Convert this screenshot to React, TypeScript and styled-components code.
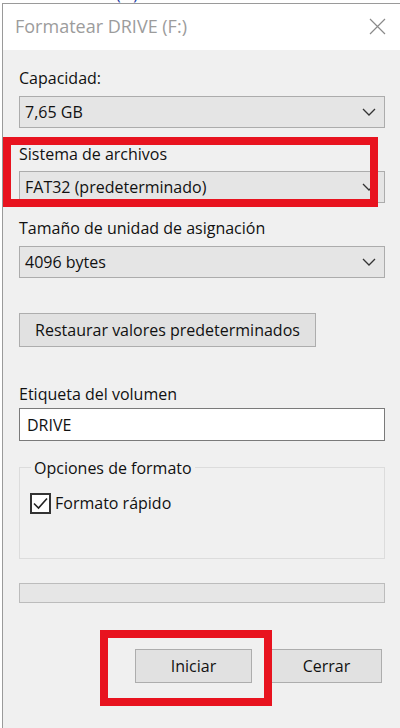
import React from "react";
import styled, { createGlobalStyle } from "styled-components";

const Global = createGlobalStyle`
  html, body { margin: 0; padding: 0; background: #ffffff; }
  body { font-family: "Open Sans", "Noto Sans", sans-serif; }
  * { box-sizing: border-box; }
`;

const Page = styled.div`
  width: 400px;
  height: 728px;
  overflow: hidden;
  position: relative;
  background: #ffffff;
`;

const TopStrip = styled.div`
  height: 3px;
  overflow: hidden;
  background: #ffffff;
`;

const TopText = styled.div`
  margin-top: -14px;
  font-size: 16px;
  line-height: 16px;
  color: #1a3aa8;
  white-space: nowrap;
`;

const Window = styled.div`
  margin-left: 2px;
  border-left: 1px solid #9a9a9a;
  border-top: 1px solid #9a9a9a;
  height: 725px;
  display: flex;
  flex-direction: column;
`;

const TitleBar = styled.div`
  height: 46px;
  background: #ffffff;
  display: flex;
  align-items: center;
  justify-content: space-between;
  padding: 0 14px 2px 12px;
`;

const Title = styled.div`
  font-size: 18px;
  color: #9c9c9c;
`;

const Body = styled.div`
  flex: 1;
  background: #f0f0f0;
  padding: 18px 15px 0 16px;
  display: flex;
  flex-direction: column;
  position: relative;
`;

const Label = styled.div<{ $mt?: number }>`
  font-size: 16px;
  line-height: 20px;
  height: 20px;
  color: #111;
  margin-top: ${(p) => p.$mt ?? 0}px;
  white-space: nowrap;
`;

const Combo = styled.div<{ $mt?: number }>`
  margin-top: ${(p) => p.$mt ?? 0}px;
  height: 32px;
  background: #e5e5e5;
  border: 1px solid #acacac;
  display: flex;
  align-items: center;
  justify-content: space-between;
  padding: 0 8px 0 5px;
  font-size: 16px;
  color: #111;
`;

const ActionButton = styled.div<{ $mt?: number; $w: number }>`
  margin-top: ${(p) => p.$mt ?? 0}px;
  width: ${(p) => p.$w}px;
  height: 34px;
  background: #e1e1e1;
  border: 1px solid #adadad;
  display: flex;
  align-items: center;
  justify-content: center;
  font-size: 16px;
  color: #111;
  white-space: nowrap;
`;

const TextInput = styled.div<{ $mt?: number }>`
  margin-top: ${(p) => p.$mt ?? 0}px;
  height: 33px;
  background: #ffffff;
  border: 1px solid #7a7a7a;
  display: flex;
  align-items: center;
  padding-left: 7px;
  font-size: 16px;
  color: #111;
`;

const GroupBox = styled.div<{ $mt?: number }>`
  margin-top: ${(p) => p.$mt ?? 0}px;
  height: 92px;
  border: 1px solid #dcdcdc;
  position: relative;
  padding: 24px 10px 0 10px;
`;

const Legend = styled.div`
  position: absolute;
  top: -11px;
  left: 11px;
  padding: 0 3px;
  background: #f0f0f0;
  font-size: 16px;
  line-height: 22px;
  color: #111;
`;

const CheckRow = styled.div`
  display: flex;
  align-items: center;
  gap: 4px;
  font-size: 16px;
  color: #111;
`;

const CheckBox = styled.div`
  width: 21px;
  height: 21px;
  border: 2px solid #333333;
  background: #ffffff;
  display: flex;
  align-items: center;
  justify-content: center;
`;

const Progress = styled.div<{ $mt?: number }>`
  margin-top: ${(p) => p.$mt ?? 0}px;
  height: 20px;
  background: #e6e6e6;
  border: 1px solid #bcbcbc;
`;

const ButtonRow = styled.div<{ $mt?: number }>`
  margin-top: ${(p) => p.$mt ?? 0}px;
  display: flex;
  justify-content: flex-end;
  gap: 19px;
  padding-right: 3px;
`;

const Highlight = styled.div<{ $x: number; $y: number; $w: number; $h: number }>`
  position: absolute;
  left: ${(p) => p.$x}px;
  top: ${(p) => p.$y}px;
  width: ${(p) => p.$w}px;
  height: ${(p) => p.$h}px;
  border: 8px solid #e8131f;
  pointer-events: none;
`;

const Chevron = () => (
  <svg width="14" height="8" viewBox="0 0 14 8">
    <path d="M1 1 L7 7 L13 1" fill="none" stroke="#333" strokeWidth="1.3" />
  </svg>
);

const CloseIcon = () => (
  <svg width="17" height="17" viewBox="0 0 17 17">
    <path d="M1 1 L16 16 M16 1 L1 16" stroke="#8a8a8a" strokeWidth="1.2" />
  </svg>
);

const CheckMark = () => (
  <svg width="15" height="13" viewBox="0 0 15 13">
    <path d="M1 6.5 L5.5 11 L14 1.5" fill="none" stroke="#222" strokeWidth="1.6" />
  </svg>
);

export default function App() {
  return (
    <Page>
      <Global />
      <TopStrip>
        <TopText>Unidad de USB (F:)</TopText>
      </TopStrip>
      <Window>
        <TitleBar>
          <Title>Formatear DRIVE (F:)</Title>
          <CloseIcon />
        </TitleBar>
        <Body>
          <Label>Capacidad:</Label>
          <Combo $mt={8}>
            <span>7,65 GB</span>
            <Chevron />
          </Combo>
          <Label $mt={16}>Sistema de archivos</Label>
          <Combo $mt={7}>
            <span>FAT32 (predeterminado)</span>
            <Chevron />
          </Combo>
          <Label $mt={15}>Tamaño de unidad de asignación</Label>
          <Combo $mt={8}>
            <span>4096 bytes</span>
            <Chevron />
          </Combo>
          <ActionButton $mt={35} $w={297}>
            Restaurar valores predeterminados
          </ActionButton>
          <Label $mt={37}>Etiqueta del volumen</Label>
          <TextInput $mt={4}>DRIVE</TextInput>
          <GroupBox $mt={26}>
            <Legend>Opciones de formato</Legend>
            <CheckRow>
              <CheckBox>
                <CheckMark />
              </CheckBox>
              Formato rápido
            </CheckRow>
          </GroupBox>
          <Progress $mt={24} />
          <ButtonRow $mt={46}>
            <ActionButton $w={117}>Iniciar</ActionButton>
            <ActionButton $w={111}>Cerrar</ActionButton>
          </ButtonRow>
        </Body>
      </Window>
      <Highlight $x={3} $y={137} $w={375} $h={70} />
      <Highlight $x={100} $y={630} $w={172} $h={76} />
    </Page>
  );
}
